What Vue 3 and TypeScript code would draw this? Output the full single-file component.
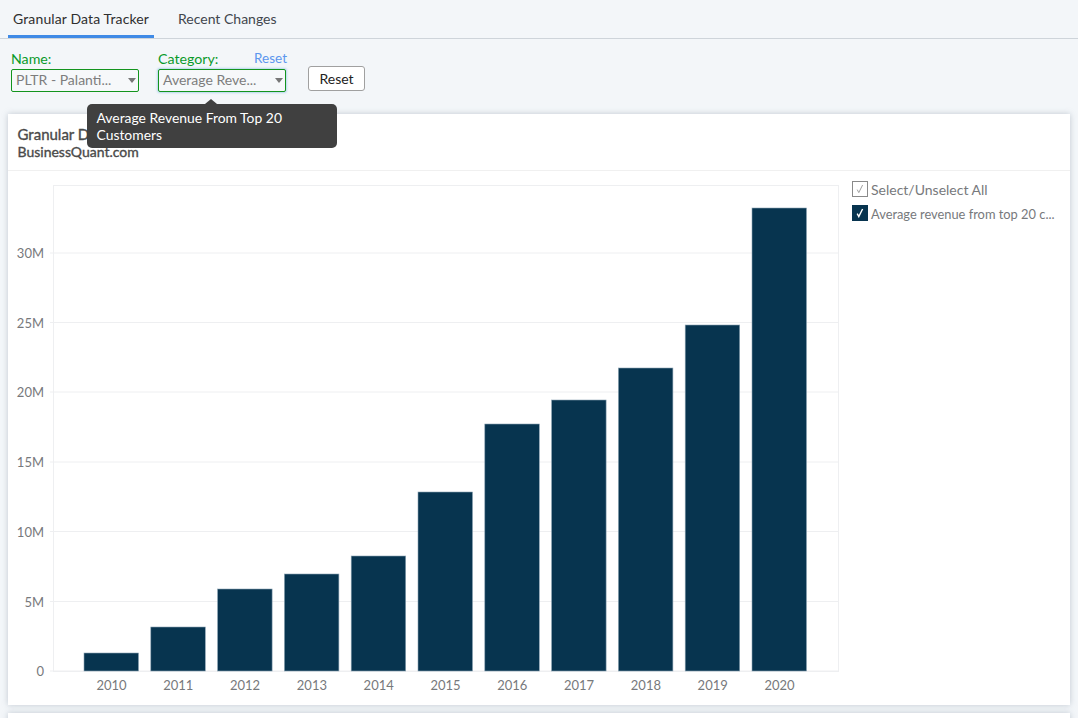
<script setup lang="ts">
const plot = { left: 53, right: 838, top: 185, bottom: 671 }
const yTicks = [
  { label: '0', y: 671 },
  { label: '5M', y: 601.5 },
  { label: '10M', y: 531.5 },
  { label: '15M', y: 462 },
  { label: '20M', y: 392 },
  { label: '25M', y: 322.5 },
  { label: '30M', y: 253 },
]
const tops = [653, 627, 589, 574, 556, 492, 424, 400, 368, 325, 208]
const bars = tops.map((top, i) => ({
  year: String(2010 + i),
  x: 84 + i * 66.8,
  top,
  h: 671 - top,
}))
</script>

<template>
  <div class="page">
    <nav class="tabs">
      <div class="tab active">Granular Data Tracker</div>
      <div class="tab">Recent Changes</div>
    </nav>

    <div class="filters">
      <div class="field name">
        <div class="label-row"><span class="label">Name:</span></div>
        <div class="select"><span>PLTR - Palanti...</span><i class="caret"></i></div>
      </div>
      <div class="field category">
        <div class="label-row"><span class="label">Category:</span><a class="link">Reset</a></div>
        <div class="select focus"><span>Average Reve...</span><i class="caret"></i></div>
        <div class="tooltip">Average Revenue From Top 20 Customers</div>
      </div>
      <button class="reset">Reset</button>
    </div>

    <section class="card">
      <header class="card-head">
        <div class="t1">Granular Data Tracker</div>
        <div class="t2">BusinessQuant.com</div>
      </header>
      <div class="card-body">
        <svg class="chart" width="1062" height="535" viewBox="8 171 1062 535">
          <rect :x="plot.left + 0.5" :y="plot.top + 0.5" :width="plot.right - plot.left" :height="plot.bottom - plot.top" fill="none" stroke="#eeeff1" />
          <g v-for="t in yTicks" :key="t.label">
            <line :x1="plot.left - 3" :x2="plot.right" :y1="t.y" :y2="t.y" stroke="#eeeff1" />
            <text class="axis" x="44" :y="t.y + 5" text-anchor="end">{{ t.label }}</text>
          </g>
          <g v-for="b in bars" :key="b.year">
            <rect :x="b.x" :y="b.top" width="54.5" :height="b.h" fill="#07344f" stroke="#8aa2b2" stroke-width="0.6" />
            <text class="axis" :x="b.x + 27.5" y="690" text-anchor="middle">{{ b.year }}</text>
          </g>
        </svg>
        <div class="legend">
          <div class="check-row">
            <span class="box off">
              <svg width="10" height="10" viewBox="0 0 10 10"><path d="M2.2 5.6 L3.8 8.6 L7.6 1" fill="none" stroke="#a0a0a0" stroke-width="1" /></svg>
            </span>
            <span>Select/Unselect All</span>
          </div>
          <div class="check-row">
            <span class="box on">
              <svg width="10" height="10" viewBox="0 0 10 10"><path d="M2.2 5.6 L3.8 8.6 L7.6 1" fill="none" stroke="#fff" stroke-width="1.4" /></svg>
            </span>
            <span class="series">Average revenue from top 20 c...</span>
          </div>
        </div>
      </div>
    </section>
    <section class="card next"></section>
  </div>
</template>

<style scoped>
.page {
  height: 718px;
  overflow: hidden;
  background: #f3f6f9;
  font-family: Lato, "Open Sans", sans-serif;
  font-size: 14px;
  color: #3c3c3c;
}
.tabs {
  display: flex;
  height: 39px;
  box-sizing: border-box;
  padding-left: 8px;
  border-bottom: 1px solid #ced4da;
}
.tab {
  height: 38px;
  box-sizing: border-box;
  padding: 10px 5px 0;
  margin-right: 19px;
  line-height: 17px;
  color: #41464d;
}
.tab.active {
  width: 146px;
  color: #2f2f2f;
  letter-spacing: 0.13px;
  white-space: nowrap;
  border-bottom: 3px solid #3f8ae6;
}
.filters {
  display: flex;
  align-items: flex-start;
  height: 75px;
  padding: 11px 0 0 11px;
  box-sizing: border-box;
}
.field { position: relative; }
.field.name { width: 128px; margin-right: 19px; }
.field.category { width: 128px; margin-right: 22px; }
.label-row {
  display: flex;
  justify-content: space-between;
  height: 19px;
  line-height: 17px;
}
.label { color: #0a9a2b; font-size: 14.2px; }
.link { color: #5c96ee; font-size: 13.5px; margin-right: -1px; }
.select {
  display: flex;
  align-items: center;
  justify-content: space-between;
  height: 23px;
  box-sizing: border-box;
  padding: 0 2.5px 2px 4px;
  border: 1px solid #13941e;
  border-radius: 2px;
  background: #f6f8fa;
  color: #7d7d7d;
}
.select.focus { box-shadow: 0 0 2px 1px rgba(90, 170, 220, 0.4); }
.caret {
  width: 0;
  height: 0;
  margin-top: 2px;
  border-left: 4.5px solid transparent;
  border-right: 4.5px solid transparent;
  border-top: 5px solid #777;
}
.tooltip {
  position: absolute;
  left: -71px;
  top: 54px;
  z-index: 5;
  width: 250px;
  height: 44px;
  box-sizing: border-box;
  padding: 5px 10px 5px 9.5px;
  border-radius: 5px;
  background: #404040;
  color: #fff;
  font-size: 13.9px;
  line-height: 17px;
}
.tooltip::before {
  content: "";
  position: absolute;
  left: 118px;
  top: -5px;
  border-left: 6px solid transparent;
  border-right: 6px solid transparent;
  border-bottom: 5px solid #404040;
}
.reset {
  width: 57px;
  height: 25px;
  margin-top: 16px;
  padding: 0;
  border: 1px solid #a0a0a0;
  border-radius: 3px;
  background: #fff;
  color: #222;
  font: 14px Lato, "Open Sans", sans-serif;
}
.card {
  position: relative;
  width: 1062px;
  height: 591px;
  margin-left: 8px;
  background: #fff;
  box-shadow: 0 0 6px rgba(120, 135, 150, 0.4);
}
.card.next { margin-top: 8px; }
.card-head {
  height: 57px;
  box-sizing: border-box;
  padding: 12px 10px 0 9.5px;
  border-bottom: 1px solid #f0f0f0;
  line-height: 17px;
  color: #4a4a4a;
  -webkit-text-stroke: 0.35px #4a4a4a;
}
.t1 { font-size: 15px; }
.t2 { font-size: 14px; }
.card-body { position: relative; height: 534px; }
.chart { display: block; }
.legend {
  position: absolute;
  left: 844px;
  top: 10px;
  color: #77797c;
}
.check-row {
  display: flex;
  align-items: center;
  gap: 3px;
  height: 16px;
  margin-bottom: 8px;
  white-space: nowrap;
}
.series { font-size: 12.85px; padding-top: 1px; }
.box {
  display: flex;
  align-items: center;
  justify-content: center;
  width: 16px;
  height: 16px;
  box-sizing: border-box;
}
.box.off { border: 1px solid #8a8a8a; background: #fff; }
.box.on { background: #07344f; }
.axis {
  font-family: Lato, "Open Sans", sans-serif;
  font-size: 13px;
  fill: #77797c;
}
</style>
